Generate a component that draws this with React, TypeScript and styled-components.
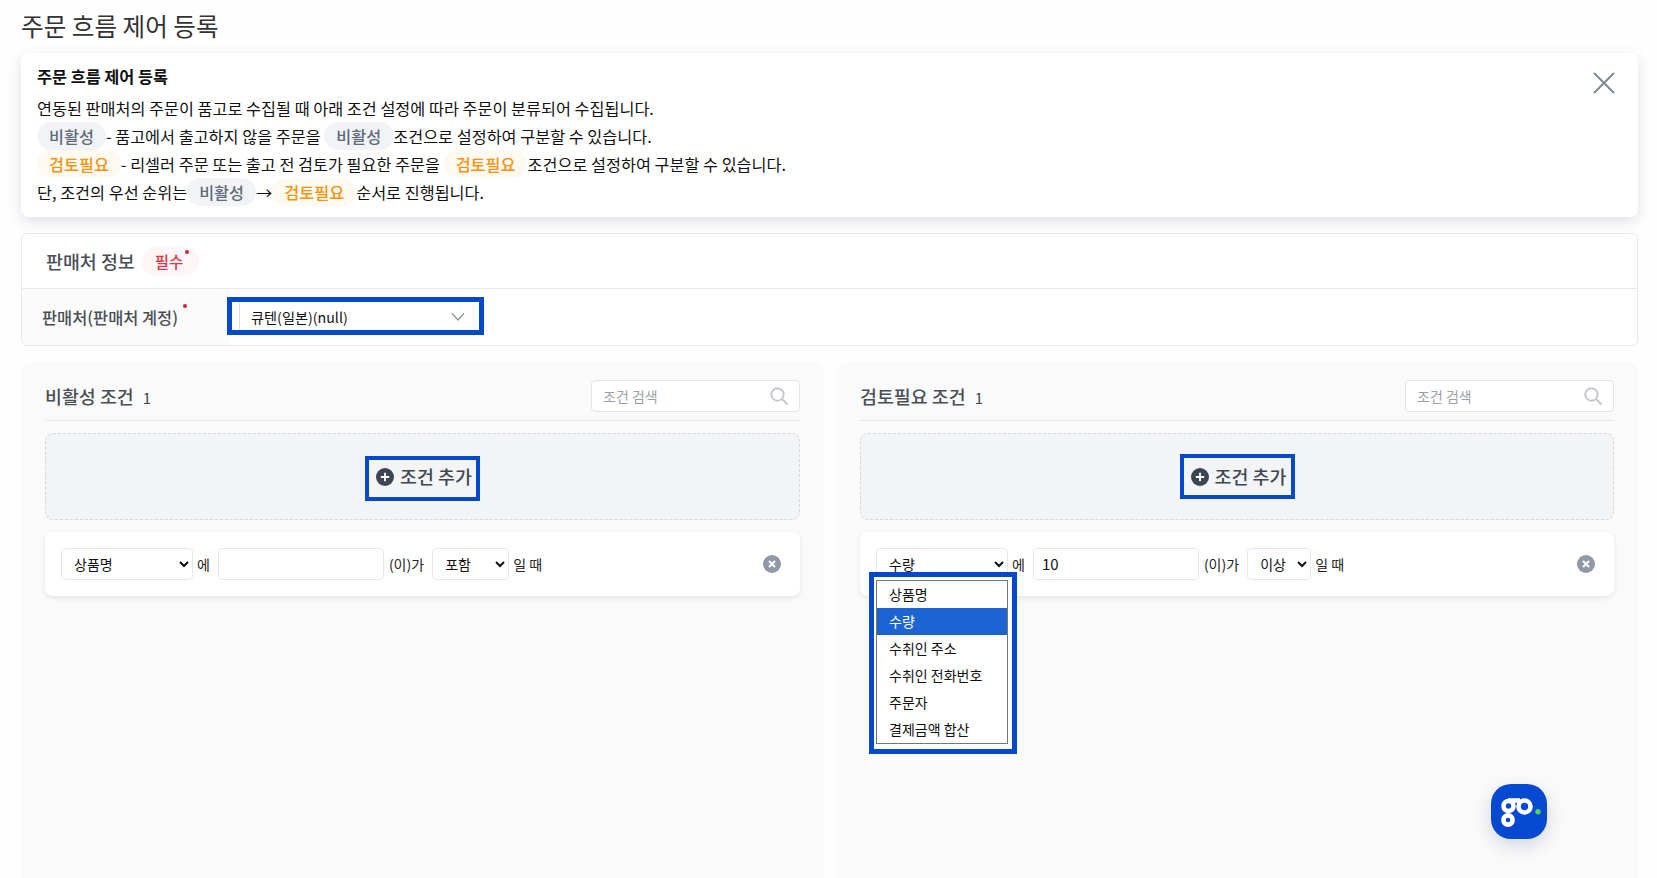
import React from "react";
import styled, { createGlobalStyle } from "styled-components";

const FONT = `"Noto Sans CJK KR", "Noto Sans", "Liberation Sans", sans-serif`;
const BLUE = "#0349c8";

const Global = createGlobalStyle`
  html, body { margin: 0; padding: 0; background: #fefefe; }
  body { font-family: ${FONT}; color: #222; }
  * { box-sizing: border-box; }
`;

const Page = styled.div`
  position: relative;
  width: 1657px;
  height: 878px;
  overflow: hidden;
  padding: 0 19px 0 21px;
`;
const PageTitle = styled.h1`
  margin: 0;
  height: 53px;
  font-size: 24.6px;
  font-weight: 400;
  line-height: 50px;
  color: #333;
`;
const Notice = styled.section`
  position: relative;
  height: 164px;
  padding: 9px 16px;
  background: #fff;
  border-radius: 8px;
  box-shadow: 0 4px 14px rgba(60, 70, 100, 0.16);
`;
const NoticeTitle = styled.div`
  height: 28px;
  font-size: 16.3px;
  font-weight: 600;
  line-height: 28px;
  color: #111;
  margin-bottom: 4px;
`;
const NoticeLine = styled.div`
  height: 28px;
  font-size: 16.27px;
  line-height: 28px;
  color: #111;
  white-space: pre;
`;
const Chip = styled.span<{ $kind: "gray" | "orange" }>`
  display: inline-block;
  height: 28px;
  padding: 0 12px;
  border-radius: 14px;
  font-size: 16.27px;
  font-weight: 500;
  line-height: 28px;
  color: ${(p) => (p.$kind === "gray" ? "#5e6b7a" : "#f5920f")};
  background: ${(p) => (p.$kind === "gray" ? "#f1f3f6" : "#fef9f1")};
`;
const CloseButton = styled.button`
  position: absolute;
  top: 19px;
  right: 23px;
  width: 22px;
  height: 22px;
  padding: 0;
  border: 0;
  background: none;
  line-height: 0;
`;
const InfoPanel = styled.section`
  margin-top: 16px;
  height: 113px;
  background: #fff;
  border: 1px solid #e7e8ea;
  border-radius: 6px;
  overflow: hidden;
`;
const InfoHeader = styled.div`
  display: flex;
  align-items: center;
  height: 55px;
  padding-left: 24px;
  border-bottom: 1px solid #e7e8ea;
`;
const SectionTitle = styled.h2`
  margin: 0;
  font-size: 18.4px;
  font-weight: 500;
  color: #4a4f57;
`;
const RequiredChip = styled.span`
  position: relative;
  display: inline-block;
  height: 29px;
  margin-left: 7px;
  padding: 0 16px 0 13px;
  border-radius: 15px;
  background: #fef6f6;
  color: #e0364c;
  font-size: 15.5px;
  font-weight: 500;
  line-height: 28px;
`;
const RedDot = styled.i<{ $top: number; $right: number }>`
  position: absolute;
  top: ${(p) => p.$top}px;
  right: ${(p) => p.$right}px;
  width: 4px;
  height: 4px;
  border-radius: 50%;
  background: #d9213d;
`;
const InfoRow = styled.div`
  display: flex;
  height: 56px;
`;
const RowLabel = styled.div`
  position: relative;
  display: flex;
  align-items: center;
  width: 209px;
  padding-left: 20px;
  background: #fbfbfb;
  font-size: 16.4px;
  font-weight: 500;
  color: #4a4f57;
`;
const Outline = styled.div`
  border: 4px solid ${BLUE};
`;
const SellerOutline = styled(Outline)`
  position: relative;
  z-index: 1;
  align-self: flex-start;
  margin: 8px 0 0 -4px;
  width: 257px;
  height: 38px;
  border-width: 5px;
  background: #fff;
`;
const SellerSelect = styled.div`
  display: flex;
  align-items: center;
  justify-content: space-between;
  height: 28px;
  margin-left: 7px;
  padding: 2px 14px 0 11px;
  border-left: 1px solid #dcdfe3;
  font-size: 14.2px;
  color: #111;
`;
const Columns = styled.div`
  display: grid;
  grid-template-columns: 803px 802px;
  gap: 12px;
  margin-top: 16px;
`;
const Column = styled.section`
  height: 520px;
  padding: 18px 24px 0;
  background: #fafafa;
  border-radius: 10px 10px 0 0;
`;
const ColumnHeader = styled.div`
  display: flex;
  align-items: center;
  justify-content: space-between;
  height: 41px;
  padding-bottom: 9px;
  border-bottom: 1px solid #e6e7ea;
  margin-bottom: 12px;
`;
const ColumnTitle = styled.h3`
  margin: 0;
  font-size: 18.4px;
  font-weight: 500;
  color: #4a4f57;
`;
const Count = styled.span`
  margin-left: 9px;
  font-size: 15px;
  font-weight: 400;
  color: #444;
`;
const SearchBox = styled.div`
  display: flex;
  align-items: center;
  justify-content: space-between;
  width: 209px;
  height: 32px;
  padding: 0 10px 0 11px;
  background: #fff;
  border: 1px solid #e2e4e9;
  border-radius: 4px;
  font-size: 14px;
  color: #9aa0a8;
`;
const DropZone = styled.div`
  display: flex;
  align-items: center;
  justify-content: center;
  height: 87px;
  background: #f3f4f6;
  border: 1px dashed #d5d8dc;
  border-radius: 8px;
`;
const AddOutline = styled(Outline)<{ $low?: boolean }>`
  margin-top: ${(p) => (p.$low ? 4 : 0)}px;
`;
const AddButtonInner = styled.div<{ $low?: boolean }>`
  display: flex;
  align-items: center;
  gap: 6px;
  width: 107px;
  height: 37px;
  padding: 0 0 ${(p) => (p.$low ? 6 : 2)}px 7px;
  font-size: 18.4px;
  font-weight: 500;
  white-space: nowrap;
  color: #3f4651;
`;
const ConditionCard = styled.div`
  position: relative;
  display: flex;
  align-items: center;
  height: 64px;
  margin-top: 12px;
  padding: 0 19px 0 16px;
  background: #fff;
  border-radius: 8px;
  box-shadow: 0 2px 5px rgba(40, 50, 70, 0.1);
  font-size: 14px;
  color: #222;
`;
const NativeSelect = styled.select<{ $width: number }>`
  width: ${(p) => p.$width}px;
  height: 32px;
  padding: 0 4px 0 8px;
  background-color: #fff;
  border: 1px solid #e7e8ea;
  border-radius: 4px;
  font-family: ${FONT};
  font-size: 14px;
  color: #111;
`;
const Word = styled.span<{ $left: number; $right: number }>`
  margin: 0 ${(p) => p.$right}px 0 ${(p) => p.$left}px;
  white-space: nowrap;
`;
const ValueInput = styled.input`
  width: 166px;
  height: 32px;
  padding: 0 8px 2px;
  border: 1px solid #e7e8ea;
  border-radius: 4px;
  font-family: ${FONT};
  font-size: 15px;
  color: #111;
`;
const RemoveIcon = styled.span`
  margin-left: auto;
  line-height: 0;
`;
const ListOutline = styled(Outline)`
  position: absolute;
  left: 9px;
  top: 40px;
  z-index: 2;
  width: 148px;
  height: 182px;
  padding: 3px 4px 5px 2px;
  background: #fff;
  border-width: 5px;
`;
const OptionList = styled.ul`
  margin: 0;
  padding: 0;
  height: 100%;
  list-style: none;
  background: #fff;
  border: 1px solid #767676;
`;
const OptionItem = styled.li<{ $selected?: boolean }>`
  height: 27px;
  padding-left: 12px;
  font-size: 14px;
  line-height: 27px;
  color: ${(p) => (p.$selected ? "#fff" : "#111")};
  background: ${(p) => (p.$selected ? "#1c64d1" : "transparent")};
`;
const Fab = styled.div`
  position: absolute;
  left: 1491px;
  top: 784px;
  width: 56px;
  height: 55px;
  border-radius: 20px;
  background: #0449cf;
  box-shadow: 0 6px 18px rgba(30, 50, 100, 0.18);
  line-height: 0;
`;

const SearchIcon = () => (
  <svg width="20" height="20" viewBox="0 0 20 20" fill="none" stroke="#c3c8cf" strokeWidth="2" strokeLinecap="round">
    <circle cx="8.5" cy="8.5" r="6.2" />
    <path d="M13.2 13.2 18 18" />
  </svg>
);
const PlusCircle = () => (
  <svg width="18" height="18" viewBox="0 0 18 18" style={{ flex: "none", marginTop: 2 }}>
    <circle cx="9" cy="9" r="9" fill="#3d4552" />
    <path d="M9 4.8v8.4M4.8 9h8.4" stroke="#fff" strokeWidth="1.8" />
  </svg>
);
const RemoveCircle = () => (
  <svg width="18" height="18" viewBox="0 0 18 18">
    <circle cx="9" cy="9" r="9" fill="#8f9aa6" />
    <path d="M6 6l6 6M12 6l-6 6" stroke="#fff" strokeWidth="2" />
  </svg>
);

const OPTIONS = ["상품명", "수량", "수취인 주소", "수취인 전화번호", "주문자", "결제금액 합산"];

const App = () => (
  <Page>
    <Global />
    <PageTitle>주문 흐름 제어 등록</PageTitle>
    <Notice>
      <NoticeTitle>주문 흐름 제어 등록</NoticeTitle>
      <NoticeLine>연동된 판매처의 주문이 품고로 수집될 때 아래 조건 설정에 따라 주문이 분류되어 수집됩니다.</NoticeLine>
      <NoticeLine>
        <Chip $kind="gray">비활성</Chip>- 품고에서 출고하지 않을 주문을 <Chip $kind="gray">비활성</Chip>조건으로 설정하여 구분할 수 있습니다.
      </NoticeLine>
      <NoticeLine>
        <Chip $kind="orange">검토필요</Chip>- 리셀러 주문 또는 출고 전 검토가 필요한 주문을 <Chip $kind="orange">검토필요</Chip>조건으로 설정하여 구분할 수 있습니다.
      </NoticeLine>
      <NoticeLine>
        단, 조건의 우선 순위는<Chip $kind="gray">비활성</Chip>→<Chip $kind="orange">검토필요</Chip>순서로 진행됩니다.
      </NoticeLine>
      <CloseButton aria-label="닫기">
        <svg width="22" height="22" viewBox="0 0 22 22" fill="none" stroke="#7f8a96" strokeWidth="2" strokeLinecap="round">
          <path d="M1.5 1.5l19 19M20.5 1.5l-19 19" />
        </svg>
      </CloseButton>
    </Notice>

    <InfoPanel>
      <InfoHeader>
        <SectionTitle>판매처 정보</SectionTitle>
        <RequiredChip>
          필수
          <RedDot $top={3} $right={10} />
        </RequiredChip>
      </InfoHeader>
      <InfoRow>
        <RowLabel>
          판매처(판매처 계정)
          <RedDot $top={15} $right={44} />
        </RowLabel>
        <SellerOutline>
          <SellerSelect>
            큐텐(일본)(null)
            <svg width="14" height="10" viewBox="0 0 14 10" fill="none" stroke="#8a929c" strokeWidth="1.3">
              <path d="M1 1.5l6 6.5 6-6.5" />
            </svg>
          </SellerSelect>
        </SellerOutline>
      </InfoRow>
    </InfoPanel>

    <Columns>
      <Column>
        <ColumnHeader>
          <ColumnTitle>
            비활성 조건<Count>1</Count>
          </ColumnTitle>
          <SearchBox>
            조건 검색
            <SearchIcon />
          </SearchBox>
        </ColumnHeader>
        <DropZone>
          <AddOutline $low>
            <AddButtonInner $low>
              <PlusCircle />
              조건 추가
            </AddButtonInner>
          </AddOutline>
        </DropZone>
        <ConditionCard>
          <NativeSelect $width={132} defaultValue="상품명">
            {OPTIONS.map((o) => (
              <option key={o}>{o}</option>
            ))}
          </NativeSelect>
          <Word $left={4} $right={8}>에</Word>
          <ValueInput defaultValue="" />
          <Word $left={5} $right={8}>(이)가</Word>
          <NativeSelect $width={77} defaultValue="포함">
            <option>포함</option>
            <option>미포함</option>
          </NativeSelect>
          <Word $left={4} $right={0}>일 때</Word>
          <RemoveIcon>
            <RemoveCircle />
          </RemoveIcon>
        </ConditionCard>
      </Column>
      <Column>
        <ColumnHeader>
          <ColumnTitle>
            검토필요 조건<Count>1</Count>
          </ColumnTitle>
          <SearchBox>
            조건 검색
            <SearchIcon />
          </SearchBox>
        </ColumnHeader>
        <DropZone>
          <AddOutline>
            <AddButtonInner>
              <PlusCircle />
              조건 추가
            </AddButtonInner>
          </AddOutline>
        </DropZone>
        <ConditionCard>
          <NativeSelect $width={132} defaultValue="수량">
            {OPTIONS.map((o) => (
              <option key={o}>{o}</option>
            ))}
          </NativeSelect>
          <Word $left={4} $right={8}>에</Word>
          <ValueInput defaultValue="10" />
          <Word $left={5} $right={8}>(이)가</Word>
          <NativeSelect $width={64} defaultValue="이상">
            <option>이상</option>
            <option>이하</option>
          </NativeSelect>
          <Word $left={4} $right={0}>일 때</Word>
          <RemoveIcon>
            <RemoveCircle />
          </RemoveIcon>
          <ListOutline>
            <OptionList>
              {OPTIONS.map((o) => (
                <OptionItem key={o} $selected={o === "수량"}>
                  {o}
                </OptionItem>
              ))}
            </OptionList>
          </ListOutline>
        </ConditionCard>
      </Column>
    </Columns>

    <Fab>
      <svg width="56" height="55" viewBox="0 0 56 55" fill="none">
        <g stroke="#fff" strokeWidth="4.6">
          <circle cx="17.5" cy="22" r="5" />
          <circle cx="17" cy="36" r="4.6" />
          <circle cx="33.5" cy="22.5" r="6" />
        </g>
        <path d="M17 16.5h12" stroke="#fff" strokeWidth="4.6" />
        <circle cx="47" cy="27.7" r="2.7" fill="#4fd65a" />
      </svg>
    </Fab>
  </Page>
);

export default App;
